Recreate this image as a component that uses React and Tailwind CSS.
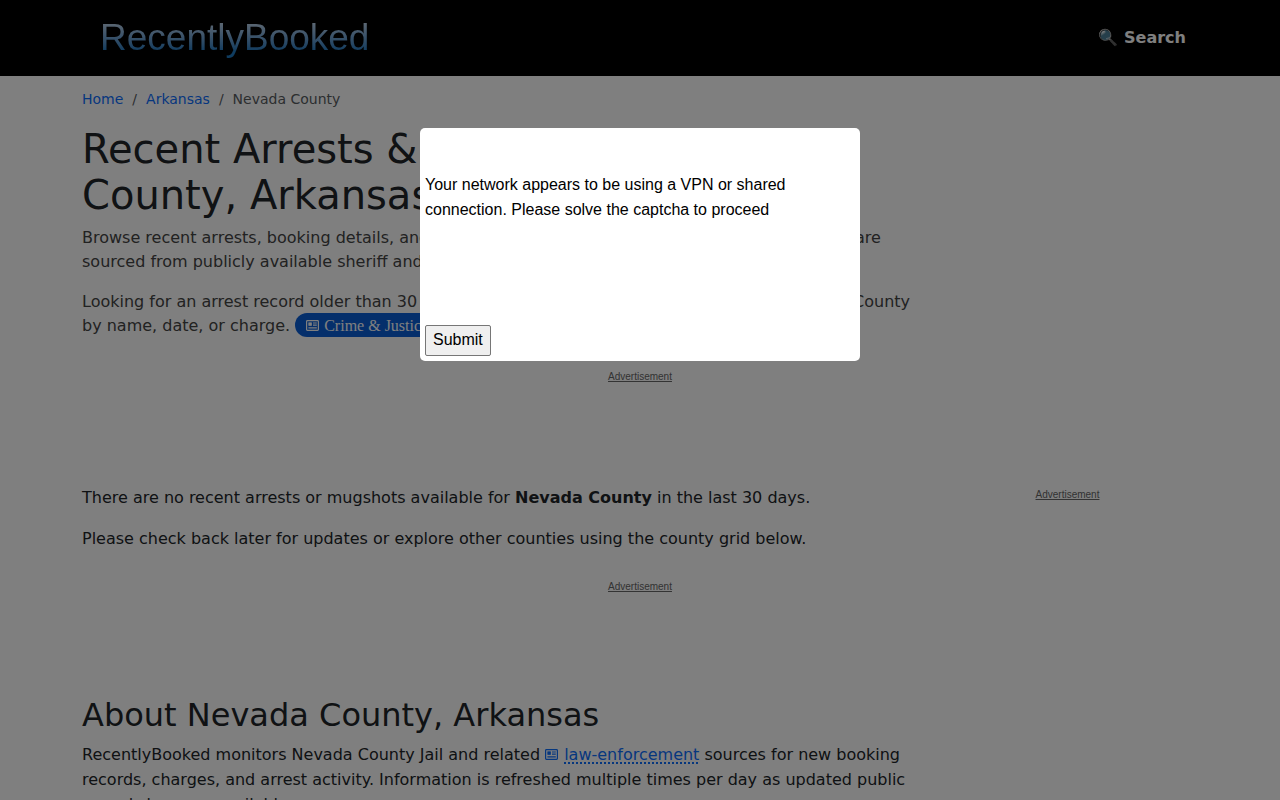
const AdLabel = () => (
  <span className="block text-center font-['Liberation_Sans',sans-serif] text-[10px] leading-4 text-[#666666] underline">
    Advertisement
  </span>
);

const NewsIcon = ({ className }) => (
  <svg viewBox="0 0 13 11" className={className} fill="none" stroke="currentColor" aria-hidden="true">
    <rect x="0.6" y="0.6" width="11.8" height="9.8" rx="0.8" strokeWidth="1.2" />
    <rect x="2.9" y="2.9" width="2.4" height="2.4" fill="currentColor" strokeWidth="1" />
    <path d="M7 3h3.8M7 5.2h3.8M2.4 7.8h8.4" strokeWidth="1.2" />
  </svg>
);

const Header = () => (
  <header className="bg-black">
    <div className="mx-auto flex h-[76px] max-w-[1140px] items-center justify-between pl-[30px] pr-6">
      <a
        href="#"
        className="bg-linear-to-b from-[#cfdcea] from-5% to-[#1f78be] to-80% bg-clip-text font-['Liberation_Sans',sans-serif] text-[37px] leading-[44px] text-transparent"
      >
        RecentlyBooked
      </a>
      <a href="#search" className="font-bold text-white">
        🔍 Search
      </a>
    </div>
  </header>
);

const Breadcrumb = () => (
  <nav aria-label="breadcrumb" className="pt-3">
    <ol className="flex gap-[9px] text-[14px] leading-[22px] text-[#585c5f]">
      <li>
        <a href="#" className="text-[#0d6efd]">Home</a>
      </li>
      <li>/</li>
      <li>
        <a href="#" className="text-[#0d6efd]">Arkansas</a>
      </li>
      <li>/</li>
      <li>Nevada County</li>
    </ol>
  </nav>
);

const CaptchaModal = () => (
  <div className="fixed inset-0 z-50 bg-black/50 pt-32">
    <div
      role="dialog"
      aria-modal="true"
      aria-labelledby="captcha-text"
      className="mx-auto w-[440px] rounded-[5px] bg-white px-[5px] pt-11 pb-[5px] font-['Liberation_Sans',sans-serif] text-black"
    >
      <p id="captcha-text" className="mb-[103px] text-[16px] leading-[25px]">
        Your network appears to be using a VPN or shared connection. Please solve the captcha to proceed
      </p>
      <button
        type="button"
        className="block rounded-[2px] border border-[#767676] bg-[#efefef] px-[7px] pt-px pb-[3px] text-[16px] leading-[25px]"
      >
        Submit
      </button>
    </div>
  </div>
);

const App = () => {
  return (
    <div className="h-screen overflow-hidden bg-white font-['DejaVu_Sans',sans-serif] text-[16px] leading-6 text-[#212529]">
      <Header />
      <main className="mx-auto max-w-[1140px] px-3">
        <Breadcrumb />

        {/* County intro */}
        <section className="w-3/4 pr-1 pt-4">
          <h1 className="mb-2 text-[40px] leading-[46px]">
            Recent Arrests &amp; Mugshots in Nevada County, Arkansas
          </h1>
          <p className="mb-4 text-[#444444]">
            Browse recent arrests, booking details, and mugshots from Nevada County, Arkansas. Bookings are
            sourced from publicly available sheriff and jail booking logs.
          </p>
          <p className="text-[#444444]">
            Looking for an arrest record older than 30 days? Search our historical arrest records for Nevada County
            by name, date, or charge.{' '}
            <a
              href="#"
              className="rounded-full bg-[#0b5ed7] px-[11px] pt-1 pb-[3px] font-['Liberation_Serif',serif] text-white"
            >
              <NewsIcon className="mr-[5px] inline h-[11px] w-[13px] align-baseline" />
              Crime &amp; Justice News
            </a>
          </p>
        </section>

        <aside className="h-[115px] pt-[31px]">
          <AdLabel />
        </aside>

        {/* Results */}
        <div className="-mx-3 flex">
          <section className="w-3/4 px-3 pt-8">
            <p className="mb-4 leading-[25px]">
              There are no recent arrests or mugshots available for <strong>Nevada County</strong> in the last 30 days.
            </p>
            <p className="leading-[25px]">
              Please check back later for updates or explore other counties using the county grid below.
            </p>
          </section>
          <aside className="w-1/4 px-3 pt-[34px]">
            <AdLabel />
          </aside>
        </div>

        <aside className="h-[145px] pt-7">
          <AdLabel />
        </aside>

        {/* About */}
        <section className="w-3/4 pr-1">
          <h2 className="mb-2 text-[32px] leading-[38px]">About Nevada County, Arkansas</h2>
          <p className="leading-[25px]">
            RecentlyBooked monitors Nevada County Jail and related{' '}
            <a href="#" className="text-[#0d6efd]">
              <NewsIcon className="mr-1.5 inline h-[11px] w-[13px] align-baseline" />
              <span className="underline decoration-dotted decoration-2 underline-offset-2">law-enforcement</span>
            </a>{' '}
            sources for new booking records, charges, and arrest activity. Information is refreshed multiple times per
            day as updated public records become available.
          </p>
        </section>
      </main>
      <CaptchaModal />
    </div>
  );
};

export default App;
